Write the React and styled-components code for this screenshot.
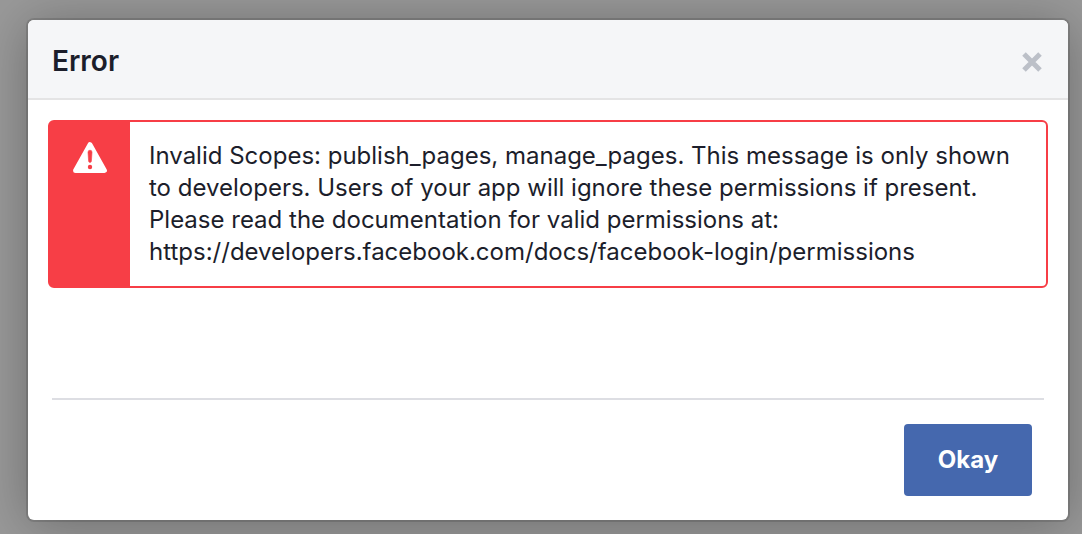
import React from "react";
import styled, { createGlobalStyle } from "styled-components";

const GlobalStyle = createGlobalStyle`
  *, *::before, *::after { box-sizing: border-box; }
  body { margin: 0; background: #999; color: #1c1e2b; font-family: Inter, "Liberation Sans", sans-serif; }
`;
const Backdrop = styled.main`
  min-height: 100vh;
  padding: 20px 14px 14px 28px;
`;
const Dialog = styled.section`
  background: #fff;
  border-radius: 6px;
  box-shadow: 0 0 0 2px rgba(0, 0, 0, 0.12), 0 4px 52px rgba(0, 0, 0, 0.3);
  overflow: hidden;
`;
const Header = styled.header`
  display: flex;
  align-items: center;
  justify-content: space-between;
  height: 80px;
  padding: 4px 24px 0;
  background: #f5f6f8;
  border-bottom: 2px solid #e4e4e5;
`;
const Title = styled.h1`
  margin: 0;
  font-size: 28px;
  font-weight: 600;
  line-height: 36px;
`;
const CloseButton = styled.button`
  display: flex;
  padding: 0;
  border: 0;
  background: none;
  color: #bcc0c8;
  cursor: pointer;
`;
const Content = styled.div`
  padding: 20px 20px 110px;
`;
const Alert = styled.div`
  display: flex;
  border: 2px solid #f73e46;
  border-radius: 6px;
`;
const AlertBadge = styled.div`
  flex: 0 0 80px;
  display: flex;
  justify-content: center;
  padding-top: 18px;
  background: #f73e46;
`;
const Message = styled.p`
  margin: 0;
  padding: 18px 19px;
  font-size: 24px;
  line-height: 32px;
`;
const Footer = styled.footer`
  display: flex;
  justify-content: flex-end;
  margin: 0 24px;
  padding: 24px 12px;
  border-top: 2px solid #dddee3;
`;
const PrimaryButton = styled.button`
  width: 128px;
  height: 72px;
  border: 0;
  border-radius: 4px;
  background: #4568ae;
  color: #fff;
  font: 700 24px/32px Inter, "Liberation Sans", sans-serif;
  cursor: pointer;
`;

export default function App() {
  return (
    <Backdrop>
      <GlobalStyle />
      <Dialog role="dialog" aria-labelledby="dialog-title">
        <Header>
          <Title id="dialog-title">Error</Title>
          <CloseButton type="button" aria-label="Close">
            <svg width="24" height="24" viewBox="0 0 24 24" fill="none" stroke="currentColor" strokeWidth="5">
              <path d="M4 5L20 21M20 5L4 21" />
            </svg>
          </CloseButton>
        </Header>
        <Content>
          <Alert role="alert">
            <AlertBadge>
              <svg width="36" height="34" viewBox="0 0 36 34" aria-hidden="true">
                <path d="M18 4.6L32.4 30.4H3.6Z" fill="#fff" stroke="#fff" strokeWidth="5" strokeLinejoin="round" />
                <path d="M16 12.2a2 2 0 0 1 4 0L19.4 21a1.4 1.4 0 0 1-2.8 0Z" fill="#f73e46" stroke="#f73e46" strokeWidth="0.6" />
                <circle cx="18" cy="27" r="2.2" fill="#f73e46" />
              </svg>
            </AlertBadge>
            <Message>
              Invalid Scopes: publish_pages, manage_pages. This message is only shown to developers. Users of your app will ignore these permissions if present. Please read the documentation for valid permissions at: https://developers.facebook.com/docs/facebook-login/permissions
            </Message>
          </Alert>
        </Content>
        <Footer>
          <PrimaryButton type="button">Okay</PrimaryButton>
        </Footer>
      </Dialog>
    </Backdrop>
  );
}
